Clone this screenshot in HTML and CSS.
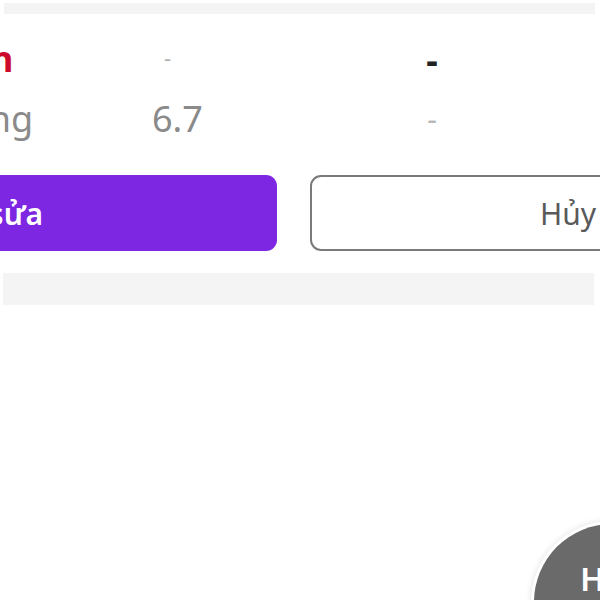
FILE: index.html
```html
<!DOCTYPE html>
<html lang="vi">
<head>
<meta charset="utf-8">
<title>Chi tiết</title>
<link rel="stylesheet" href="styles.css">
</head>
<body>
<div class="page">
  <div class="band band-top"></div>
  <div class="card">
    <div class="table">
      <div class="cell label label-red">Giá bán</div>
      <div class="cell value value-faint">-</div>
      <div class="cell value-c value-bold">-</div>
      <div class="cell label label-gray">Số lượng</div>
      <div class="cell value">6.7</div>
      <div class="cell value-c value-light">-</div>
    </div>
    <div class="actions">
      <button class="btn btn-primary">Chỉnh sửa</button>
      <button class="btn btn-outline">Hủy bỏ</button>
    </div>
  </div>
  <div class="band band-bottom"></div>
  <button class="fab">Hỗ trợ</button>
</div>
</body>
</html>
```
FILE: styles.css
```css
* { box-sizing: border-box; }
html, body {
  margin: 0;
  padding: 0;
  background: #ffffff;
}
body {
  font-family: "Noto Sans", "Open Sans", sans-serif;
}
.page {
  position: relative;
  width: 600px;
  height: 600px;
  overflow: hidden;
  background: #ffffff;
}
.band {
  background: #f4f4f4;
}
.band-top {
  height: 11px;
  margin: 3px 5px 0 4px;
}
.card {
  padding-top: 14px;
}
.table {
  display: grid;
  grid-template-columns: 352px 200px 160px;
  grid-auto-rows: 60px;
  margin-left: -200px;
}
.cell {
  display: flex;
  align-items: center;
  white-space: nowrap;
  font-size: 36px;
}
.label {
  padding-left: 82px;
}
.label-red {
  color: #cc0a2b;
  font-weight: 700;
  padding-left: 78px;
}
.label-gray {
  color: #8a8a8a;
}
.value {
  color: #8a8a8a;
}
.value-faint {
  color: #b0b0b0;
  font-size: 22px;
  padding-left: 12px;
  align-items: flex-start;
  padding-top: 14px;
}
.value-c {
  justify-content: center;
  padding-left: 0;
}
.value-bold {
  color: #222222;
  font-weight: 700;
  padding-top: 2px;
}
.value-light {
  color: #b8b8b8;
  font-size: 30px;
}
.actions {
  display: flex;
  gap: 33px;
  margin-top: 27px;
  margin-left: -40px;
  width: 700px;
}
.btn {
  height: 76px;
  border-radius: 11px;
  font-family: "Noto Sans", "Open Sans", sans-serif;
  font-size: 30px;
  display: flex;
  align-items: center;
  white-space: nowrap;
}
.btn-primary {
  width: 317px;
  background: #7d27e2;
  border: none;
  color: #ffffff;
  font-weight: 600;
  justify-content: flex-end;
  padding-right: 234px;
}
.btn-outline {
  width: 350px;
  background: #ffffff;
  border: 2px solid #7a7a7a;
  color: #5a5a5a;
  justify-content: flex-start;
  padding-left: 228px;
}
.band-bottom {
  height: 32px;
  margin: 22px 6px 0 3px;
}
.fab {
  position: absolute;
  left: 534px;
  top: 524px;
  width: 156px;
  height: 156px;
  border-radius: 50%;
  background: #6a6a6a;
  border: none;
  box-shadow: 0 0 0 3px #ffffff, 0 0 6px 3px rgba(0,0,0,0.12);
  color: #ffffff;
  font-family: "Noto Sans", "Open Sans", sans-serif;
  font-size: 33px;
  font-weight: 600;
  text-align: left;
  padding: 0 0 0 46px;
  display: flex;
  align-items: flex-start;
  padding-top: 32px;
  white-space: nowrap;
}
```
